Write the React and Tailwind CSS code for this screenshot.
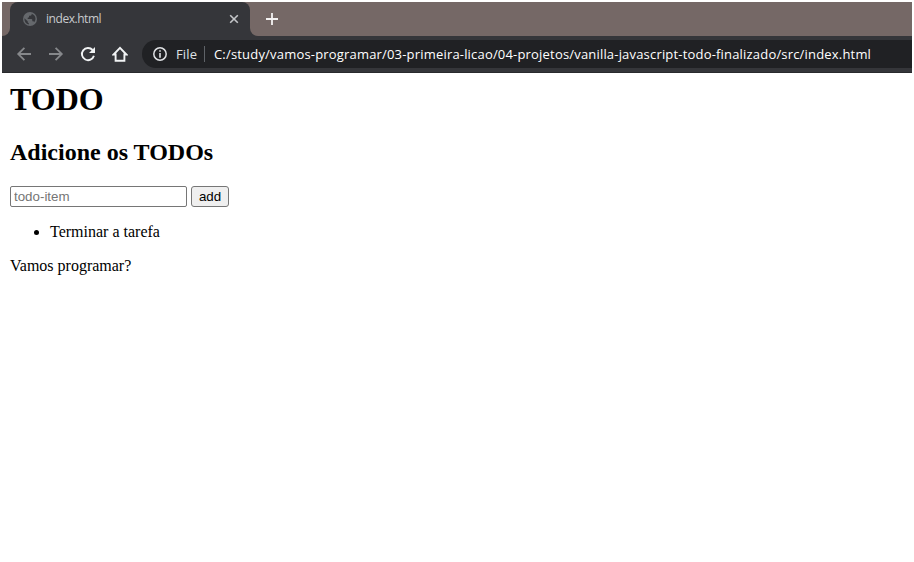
const GlobeIcon = () => (
  <svg width="14" height="14" viewBox="0 0 14 14">
    <circle cx="7" cy="7" r="7" fill="#65686c" />
    <path d="M1.4 6.2 L4.7 9.2 V10 Q4.7 10.8 5.8 11 V12.5 C3 12 1.2 9.6 1.4 6.2Z M8.7 1.8 V2.3 Q8.7 3.6 7.3 3.7 H6 V5 Q6 5.7 4.7 5.7 V7 H8.5 Q9.3 7 9.3 8 V9.2 H10 Q11 9.3 11.2 10.3 C13.6 7.4 12.7 3.3 8.7 1.8Z" fill="#35363a" />
  </svg>
);

const Stroke = ({ d, color, width = 2, size = 16 }) => (
  <svg width={size} height={size} viewBox={`0 0 ${size} ${size}`} fill="none" stroke={color} strokeWidth={width}>
    <path d={d} />
  </svg>
);

function TabStrip() {
  return (
    <div className="flex h-[34px] bg-[#756866]">
      <div className="flex w-2 bg-[#35363a]">
        <div className="w-2 rounded-br-lg bg-[#756866]" />
      </div>
      <div className="flex w-60 items-center rounded-t-lg bg-[#35363a] pl-[13px] pr-[11px]">
        <GlobeIcon />
        <span className="ml-[9px] flex-1 text-[12px] leading-4 tracking-[-0.45px] text-[#c8cacd]">index.html</span>
        <Stroke size={10} width={1.6} color="#c4c6c9" d="M1.2 1.2 L8.8 8.8 M8.8 1.2 L1.2 8.8" />
      </div>
      <div className="flex flex-1 bg-[#35363a]">
        <div className="flex flex-1 items-center rounded-bl-lg bg-[#756866] pl-4">
          <Stroke size={12} width={1.8} color="#f4f2f2" d="M6 0 V12 M0 6 H12" />
        </div>
      </div>
    </div>
  );
}

function Toolbar() {
  return (
    <div className="flex h-[37px] items-center border-b border-[#292a2d] bg-[#35363a] pl-3.5">
      <div className="flex w-[126px] shrink-0 gap-4">
        <Stroke color="#86888b" width={1.8} d="M15 8 H2.2 M8.4 1.8 L2.2 8 L8.4 14.2" />
        <Stroke color="#86888b" width={1.8} d="M1 8 H13.8 M7.6 1.8 L13.8 8 L7.6 14.2" />
        <svg width="16" height="16" viewBox="0 0 16 16">
          <path d="M12.6 4 A6.1 6.1 0 1 0 13.9 9.7" fill="none" stroke="#f1f3f4" strokeWidth="1.9" />
          <path d="M15 1 V7 H9Z" fill="#f1f3f4" />
        </svg>
        <Stroke color="#f1f3f4" width={1.9} d="M1.6 8.5 H3.6 V14.8 H12.4 V8.5 H14.4 L8 1.8Z" />
      </div>
      <div className="flex h-7 flex-1 items-center overflow-hidden rounded-l-full bg-[#202124] pl-[11px]">
        <svg width="14" height="14" viewBox="0 0 14 14" fill="none" stroke="#e0e2e5">
          <circle cx="7" cy="7" r="6.2" strokeWidth="1.5" />
          <path d="M7 3.2 V4.8 M7 6 V10.8" strokeWidth="1.6" />
        </svg>
        <span className="ml-[9px] w-[21px] text-[13px] leading-5 tracking-[0.15px] text-[#dfe1e4]">File</span>
        <div className="ml-[7px] h-4 w-px bg-[#5f6368]" />
        <span className="ml-[9px] whitespace-nowrap text-[13px] leading-5 tracking-[0.185px] text-white">
          C:/study/vamos-programar/03-primeira-licao/04-projetos/vanilla-javascript-todo-finalizado/src/index.html
        </span>
      </div>
    </div>
  );
}

export default function App() {
  return (
    <div className="h-[562px] w-[914px] overflow-hidden bg-white px-0.5 pt-0.5 font-['Open_Sans',sans-serif]">
      <header>
        <TabStrip />
        <Toolbar />
      </header>
      <main className="px-2 pt-2 font-['Liberation_Serif',serif] text-base leading-[18px] text-black">
        <h1 className="text-[32px] font-bold leading-9">TODO</h1>
        <h2 className="mt-[21px] text-2xl font-bold leading-7">Adicione os TODOs</h2>
        <div className="mt-5 flex gap-1 font-['Liberation_Sans',sans-serif] text-[13.333px]">
          <input
            className="h-[21px] w-[177px] rounded-[2px] border border-[#767676] px-[3px] placeholder:text-[#757575]"
            placeholder="todo-item"
          />
          <button className="h-[21px] w-[38px] rounded-[3px] border border-[#767676] bg-[#efefef] leading-[18px]">add</button>
        </div>
        <ul className="mt-4 list-disc pl-10">
          <li>Terminar a tarefa</li>
        </ul>
        <p className="mt-4">Vamos programar?</p>
      </main>
    </div>
  );
}
